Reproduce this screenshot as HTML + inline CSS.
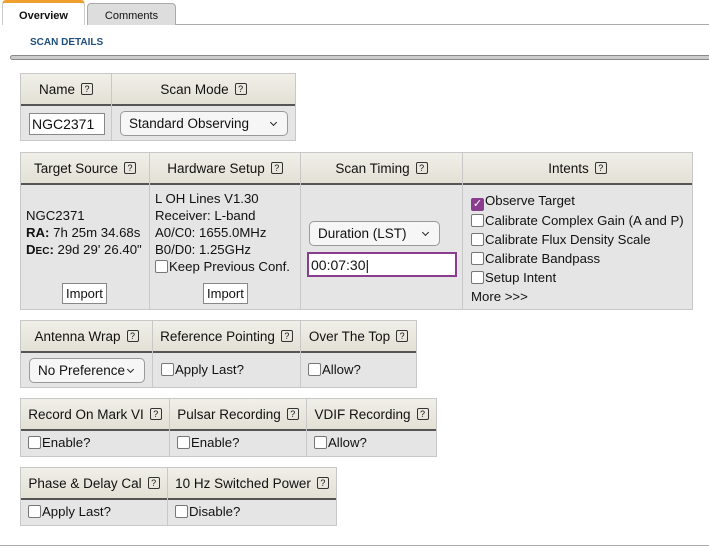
<!DOCTYPE html>
<html><head><style>
*{box-sizing:border-box;margin:0;padding:0}
body{width:709px;height:549px;background:#fff;font-family:"Liberation Sans",Arial,sans-serif;font-size:13.2px;color:#111;position:relative;overflow:hidden}
.a{position:absolute}
.tbl{position:absolute;background:#e5e5e5;border:1px solid #c8c8c8}
.hd{position:absolute;top:0;height:32px;background:linear-gradient(#f0efe9,#e3e1d5);border-bottom:2px solid #555;display:flex;align-items:center;justify-content:center;font-size:13.5px;border-right:1px solid #c8c8c8;white-space:nowrap}
.vl{position:absolute;top:0;bottom:0;width:1px;background:#c8c8c8}
.q{display:inline-block;width:12px;height:12px;border:1px solid #333;border-radius:2px;font-size:9px;line-height:10px;text-align:center;margin-left:6px;vertical-align:0}
.cb{display:inline-block;width:13px;height:13px;border:1px solid #777;border-radius:2px;background:#fff;vertical-align:-2px;margin-right:1px}
.sel{position:absolute;height:25px;border:1px solid #999;border-radius:5px;background:#f6f6f6;font-size:13.5px;padding:4px 0 0 8px}
.sel:after{content:"";position:absolute;right:11px;top:8px;width:4px;height:4px;border-right:1px solid #222;border-bottom:1px solid #222;transform:rotate(45deg)}
.btn{position:absolute;background:#fff;border:1px solid #888;font-size:13px;padding:2px 3px}
</style></head><body>
<div class="a" style="left:176px;top:24px;width:533px;height:1px;background:#aaa"></div>
<div class="a" style="left:87px;top:3px;width:89px;height:22px;background:#ddd;border:1px solid #aaa;border-bottom:none;border-radius:4px 4px 0 0;font-size:11px;text-align:center;padding-top:6px">Comments</div>
<div class="a" style="left:2px;top:0;width:83px;height:25px;background:#fff;border-top:3px solid #f0a030;border-left:1px solid #ccc;border-right:1px solid #ccc;border-radius:4px 4px 0 0;font-size:11px;font-weight:bold;text-align:center;padding-top:7px">Overview</div>
<div class="a" style="left:30px;top:37px;font-size:10px;font-weight:bold;color:#1f4f7f">SCAN DETAILS</div>
<div class="a" style="left:10px;top:55px;width:700px;height:5px;background:#ccc;border:1px solid #888;border-radius:3px 0 0 3px"></div>

<div class="tbl" style="left:20px;top:73px;width:276px;height:68px">
<div class="hd" style="left:0;width:91px">Name<span class="q">?</span></div>
<div class="hd" style="left:91px;width:183px;border-right:none">Scan Mode<span class="q">?</span></div>
<div class="vl" style="left:90px"></div>
<div class="a" style="left:8px;top:39px;width:76px;height:22px;background:#fff;border:1px solid #888;font-size:14px;padding:2px 0 0 2px">NGC2371</div>
<div class="sel" style="left:99px;top:37px;width:168px">Standard Observing</div>
</div>

<div class="tbl" style="left:20px;top:152px;width:673px;height:158px">
<div class="hd" style="left:0;width:129px">Target Source<span class="q">?</span></div>
<div class="hd" style="left:129px;width:151px">Hardware Setup<span class="q">?</span></div>
<div class="hd" style="left:280px;width:162px">Scan Timing<span class="q">?</span></div>
<div class="hd" style="left:442px;width:229px;border-right:none">Intents<span class="q">?</span></div>
<div class="vl" style="left:128px"></div><div class="vl" style="left:279px"></div><div class="vl" style="left:441px"></div>
<div class="a" style="left:5px;top:54px;line-height:17px">NGC2371<br><b>RA:</b> 7h 25m 34.68s<br><b>D<span style="font-size:10px">EC</span>:</b> 29d 29' 26.40"</div>
<div class="btn" style="left:41px;top:130px">Import</div>
<div class="a" style="left:134px;top:37px;line-height:17px">L OH Lines V1.30<br>Receiver: L-band<br>A0/C0: 1655.0MHz<br>B0/D0: 1.25GHz<br><span class="cb"></span>Keep Previous Conf.</div>
<div class="btn" style="left:182px;top:130px">Import</div>
<div class="sel" style="left:288px;top:68px;width:131px">Duration (LST)</div>
<div class="a" style="left:286px;top:99px;width:150px;height:25px;background:#fff;border:2px solid #8a3d8f;font-size:14px;padding:3px 0 0 2px">00:07:30|</div>
<div class="a" style="left:450px;top:38px;line-height:19px"><span class="cb" style="background:#8a3d8f;border-color:#8a3d8f;color:#fff;font-size:11px;line-height:11px;text-align:center">✓</span>Observe Target<br><span class="cb"></span>Calibrate Complex Gain (A and P)<br><span class="cb"></span>Calibrate Flux Density Scale<br><span class="cb"></span>Calibrate Bandpass<br><span class="cb"></span>Setup Intent<br>More &gt;&gt;&gt;</div>
</div>

<div class="tbl" style="left:20px;top:320px;width:397px;height:68px">
<div class="hd" style="left:0;width:132px">Antenna Wrap<span class="q">?</span></div>
<div class="hd" style="left:132px;width:148px">Reference Pointing<span class="q">?</span></div>
<div class="hd" style="left:280px;width:115px;border-right:none">Over The Top<span class="q">?</span></div>
<div class="vl" style="left:131px"></div><div class="vl" style="left:279px"></div>
<div class="sel" style="left:8px;top:37px;width:116px">No Preference</div>
<div class="a" style="left:140px;top:41px"><span class="cb"></span>Apply Last?</div>
<div class="a" style="left:287px;top:41px"><span class="cb"></span>Allow?</div>
</div>

<div class="tbl" style="left:20px;top:398px;width:417px;height:59px">
<div class="hd" style="left:0;width:149px">Record On Mark VI<span class="q">?</span></div>
<div class="hd" style="left:149px;width:137px">Pulsar Recording<span class="q">?</span></div>
<div class="hd" style="left:286px;width:129px;border-right:none">VDIF Recording<span class="q">?</span></div>
<div class="vl" style="left:148px"></div><div class="vl" style="left:285px"></div>
<div class="a" style="left:7px;top:36px"><span class="cb"></span>Enable?</div>
<div class="a" style="left:156px;top:36px"><span class="cb"></span>Enable?</div>
<div class="a" style="left:293px;top:36px"><span class="cb"></span>Allow?</div>
</div>

<div class="tbl" style="left:20px;top:467px;width:317px;height:59px">
<div class="hd" style="left:0;width:147px">Phase &amp; Delay Cal<span class="q">?</span></div>
<div class="hd" style="left:147px;width:168px;border-right:none">10 Hz Switched Power<span class="q">?</span></div>
<div class="vl" style="left:146px"></div>
<div class="a" style="left:7px;top:36px"><span class="cb"></span>Apply Last?</div>
<div class="a" style="left:154px;top:36px"><span class="cb"></span>Disable?</div>
</div>

<div class="a" style="left:0;top:545px;width:709px;height:1px;background:#aaa"></div>
</body></html>
